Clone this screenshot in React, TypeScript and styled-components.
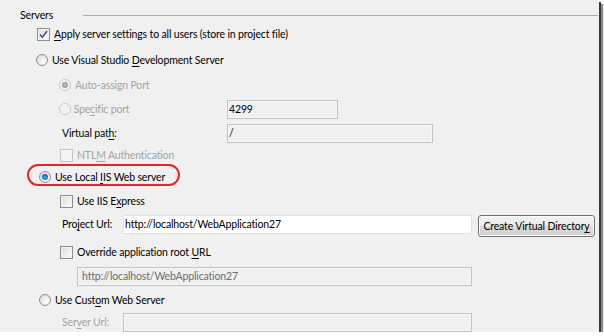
import React from 'react';
import styled, { createGlobalStyle } from 'styled-components';

const GlobalStyle = createGlobalStyle`
  html, body {
    margin: 0;
    padding: 0;
    background: #ffffff;
  }
  body {
    font-family: Lato, 'Open Sans', 'Liberation Sans', sans-serif;
    font-size: 10.5px;
    letter-spacing: -0.15px;
    color: #000;
  }
`;

const Frame = styled.div`
  width: 599px;
  height: 332px;
  background: #f0f0f0;
  box-shadow: 2px 2px 0 #3a3a3a, 4px 4px 1px #8a8a8a;
  overflow: hidden;
  display: flex;
  flex-direction: column;
`;

const GroupHeader = styled.div`
  display: flex;
  align-items: center;
  height: 16px;
  margin-top: 7px;
  padding-left: 20px;
`;

const GroupTitle = styled.span`
  width: 63px;
  line-height: 16px;
`;

const Rule = styled.div`
  flex: 1;
  height: 1px;
  margin-right: 1px;
  background: #ababab;
`;

const Row = styled.div<{ $gap: number; $indent: number }>`
  display: flex;
  align-items: center;
  height: 20px;
  margin-top: ${p => p.$gap}px;
  padding-left: ${p => p.$indent}px;
  flex-shrink: 0;
`;

const Label = styled.span<{ $disabled?: boolean; $width?: number }>`
  color: ${p => (p.$disabled ? '#a3a3a3' : '#000')};
  white-space: nowrap;
  margin-left: ${p => (p.$width ? 0 : 4)}px;
  width: ${p => (p.$width ? `${p.$width}px` : 'auto')};
  flex-shrink: 0;
`;

const Key = styled.span`
  text-decoration: underline;
  text-underline-offset: 2px;
`;

const Box = styled.span<{ $disabled?: boolean }>`
  box-sizing: border-box;
  width: 13px;
  height: 13px;
  flex-shrink: 0;
  border: 1px solid ${p => (p.$disabled ? '#c4c4c4' : '#8e8f8f')};
  background: ${p =>
    p.$disabled
      ? '#f4f4f4'
      : 'linear-gradient(135deg, #d9d9d9 0%, #f0f0f0 60%, #ffffff 100%)'};
  box-shadow: inset 0 0 0 1px ${p => (p.$disabled ? '#f7f7f7' : '#f2f2f2')};
  display: flex;
  align-items: center;
  justify-content: center;
`;

const Circle = styled.span<{ $disabled?: boolean }>`
  box-sizing: border-box;
  width: 12px;
  height: 12px;
  flex-shrink: 0;
  border-radius: 50%;
  border: 1px solid ${p => (p.$disabled ? '#c9c9c9' : '#8e8f8f')};
  background: ${p =>
    p.$disabled
      ? '#f3f3f3'
      : 'radial-gradient(circle at 65% 70%, #ffffff 0%, #ececec 45%, #d2d2d2 100%)'};
  display: flex;
  align-items: center;
  justify-content: center;
`;

const Dot = styled.span<{ $disabled?: boolean }>`
  width: 6px;
  height: 6px;
  border-radius: 50%;
  background: ${p =>
    p.$disabled
      ? 'radial-gradient(circle at 50% 50%, #bdbdbd 0%, #8f8f8f 100%)'
      : 'radial-gradient(circle at 50% 60%, #4fb4f0 0%, #1f6fae 55%, #17375c 100%)'};
`;

const CheckBox: React.FC<{ checked?: boolean; disabled?: boolean }> = ({ checked, disabled }) => (
  <Box $disabled={disabled}>
    {checked && (
      <svg width="9" height="9" viewBox="0 0 9 9">
        <path d="M1 4.5 L3.4 7.2 L8 1" fill="none" stroke="#3f5581" strokeWidth="1.6" />
      </svg>
    )}
  </Box>
);

const Radio: React.FC<{ checked?: boolean; disabled?: boolean }> = ({ checked, disabled }) => (
  <Circle $disabled={disabled}>{checked && <Dot $disabled={disabled} />}</Circle>
);

const TextBox = styled.div<{ $width: number; $tone: 'white' | 'gray' | 'flat' }>`
  box-sizing: border-box;
  width: ${p => p.$width}px;
  height: 19px;
  flex-shrink: 0;
  padding: 0 ${p => (p.$tone === 'gray' ? 4 : 1)}px;
  line-height: 17px;
  white-space: nowrap;
  overflow: hidden;
  border: 1px solid ${p => (p.$tone === 'white' ? '#e3e3e3' : '#c2c2c2')};
  box-shadow: inset 0 0 0 1px ${p => (p.$tone === 'white' ? '#ffffff' : '#f7f7f7')};
  background: ${p => (p.$tone === 'white' ? '#ffffff' : '#f0f0f0')};
  color: ${p => (p.$tone === 'gray' ? '#6d6d6d' : '#000')};
`;

const ActionButton = styled.button`
  box-sizing: border-box;
  width: 117px;
  height: 22px;
  margin-left: 6px;
  margin-top: 4px;
  padding: 0;
  flex-shrink: 0;
  white-space: nowrap;
  border: 1px solid #707070;
  border-radius: 3px;
  background: linear-gradient(#f2f2f2 0%, #ebebeb 50%, #dddddd 51%, #cfcfcf 100%);
  box-shadow: inset 0 0 0 1px #fbfbfb;
  font-family: inherit;
  font-size: inherit;
  letter-spacing: inherit;
  color: #000;
`;

const Highlight = styled.div`
  box-sizing: border-box;
  display: flex;
  align-items: center;
  height: 22px;
  padding: 4px 13px 0 10px;
  margin-left: -12px;
  border: 2px solid #e3262b;
  border-radius: 12px;
`;

const App: React.FC = () => (
  <>
    <GlobalStyle />
    <Frame>
      <GroupHeader>
        <GroupTitle>Servers</GroupTitle>
        <Rule />
      </GroupHeader>

      <Row $gap={1} $indent={37}>
        <CheckBox checked />
        <Label>
          <Key>A</Key>pply server settings to all users (store in project file)
        </Label>
      </Row>

      <Row $gap={6} $indent={36}>
        <Radio />
        <Label>
          Use Visual Studio <Key>D</Key>evelopment Server
        </Label>
      </Row>

      <Row $gap={5} $indent={59}>
        <Radio checked disabled />
        <Label $disabled>Auto-assign Port</Label>
      </Row>

      <Row $gap={4} $indent={59}>
        <Radio disabled />
        <Label $disabled $width={156}>
          &nbsp;Spe<Key>c</Key>ific port
        </Label>
        <TextBox $width={111} $tone="flat">4299</TextBox>
      </Row>

      <Row $gap={4} $indent={62}>
        <Label $width={165}>
          Virtual pat<Key>h</Key>:
        </Label>
        <TextBox $width={206} $tone="flat">/</TextBox>
      </Row>

      <Row $gap={2} $indent={60}>
        <CheckBox disabled />
        <Label $disabled>
          NTL<Key>M</Key> Authentication
        </Label>
      </Row>

      <Row $gap={0} $indent={39}>
        <Highlight>
          <Radio checked />
          <Label>
            Use Local <Key>I</Key>IS Web server
          </Label>
        </Highlight>
      </Row>

      <Row $gap={6} $indent={60}>
        <CheckBox />
        <Label>
          Use IIS E<Key>x</Key>press
        </Label>
      </Row>

      <Row $gap={3} $indent={62}>
        <Label $width={61}>
          Pro<Key>j</Key>ect Url:
        </Label>
        <TextBox $width={349} $tone="white">http://localhost/WebApplication27</TextBox>
        <ActionButton>
          Create Virtual Director<Key>y</Key>
        </ActionButton>
      </Row>

      <Row $gap={8} $indent={60}>
        <CheckBox />
        <Label>
          Override application root <Key>U</Key>RL
        </Label>
      </Row>

      <Row $gap={4} $indent={77}>
        <TextBox $width={395} $tone="gray">http://localhost/WebApplication27</TextBox>
      </Row>

      <Row $gap={4} $indent={39}>
        <Radio />
        <Label>
          Use Cust<Key>o</Key>m Web Server
        </Label>
      </Row>

      <Row $gap={2} $indent={62}>
        <Label $disabled $width={61}>
          Ser<Key>v</Key>er Url:
        </Label>
        <TextBox $width={349} $tone="flat" />
      </Row>
    </Frame>
  </>
);

export default App;
